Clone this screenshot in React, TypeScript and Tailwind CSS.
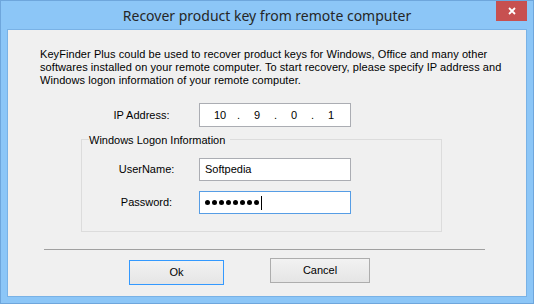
import React from "react";

const ui = "font-['Liberation_Sans',Arial,sans-serif] text-[11px] text-black";

const Field = ({ children, focused }: { children?: React.ReactNode; focused?: boolean }) => (
  <div
    className={`flex h-[23px] w-[152px] items-center bg-white px-[5px] border ${
      focused ? "border-[#569de5]" : "border-[#abadb3]"
    }`}
  >
    {children}
  </div>
);

const Octet = ({ v }: { v: string }) => <span className="w-[30px] text-center">{v}</span>;
const Dot = () => <span className="w-[7px] text-center">.</span>;

const Button = ({ label, primary, className }: { label: string; primary?: boolean; className?: string }) => (
  <button
    className={`flex h-[25px] items-center justify-center border bg-gradient-to-b from-[#f2f2f2] to-[#e5e5e5] ${
      primary ? "border-[#3399ff]" : "border-[#adadad]"
    } ${className ?? ""}`}
  >
    {label}
  </button>
);

export default function App() {
  return (
    <div className="flex h-[304px] w-[534px] flex-col border border-[#6ea6dc] bg-[#8cc6f7]">
      {/* title bar */}
      <div className="relative flex h-[28px] items-center justify-center">
        <span className="font-['Noto_Sans',sans-serif] text-[14px] text-[#262626]">
          Recover product key from remote computer
        </span>
        <div className="absolute right-[6px] top-0 flex h-[20px] w-[31px] items-center justify-center bg-[#c75050]">
          <svg width="8" height="8" viewBox="0 0 8 8">
            <path d="M1 1L7 7M7 1L1 7" stroke="white" strokeWidth="1.8" />
          </svg>
        </div>
      </div>

      {/* client area */}
      <div className={`mx-[6px] mb-[6px] flex flex-1 flex-col border border-[#79b2e6] bg-[#f0f0f0] ${ui}`}>
        <p className="ml-[32px] mt-[18px] leading-[13px] tracking-[0.07px]">
          KeyFinder Plus could be used to recover product keys for Windows, Office and many other
          <br />
          softwares installed on your remote computer. To start recovery, please specify IP address and
          <br />
          Windows logon information of your remote computer.
        </p>

        <div className="mt-[16px] flex h-[24px] items-center">
          <span className="ml-[100px] w-[67px] text-center">IP Address:</span>
          <div className="ml-[24px] flex h-[24px] w-[152px] items-center border border-[#abadb3] bg-white pl-[5px]">
            <Octet v="10" />
            <Dot />
            <Octet v="9" />
            <Dot />
            <Octet v="0" />
            <Dot />
            <Octet v="1" />
          </div>
        </div>

        <div className="relative ml-[73px] mt-[12px] h-[93px] w-[361px] border border-[#dcdcdc]">
          <span className="absolute left-[7px] -top-[8px] bg-[#f0f0f0] pr-[5px]">Windows Logon Information</span>
          <div className="mt-[18px] flex items-center">
            <span className="ml-[30px] w-[69px] text-center">UserName:</span>
            <div className="ml-[18px]">
              <Field>Softpedia</Field>
            </div>
          </div>
          <div className="mt-[10px] flex items-center">
            <span className="ml-[30px] w-[69px] text-center">Password:</span>
            <div className="ml-[18px]">
              <Field focused>
                <div className="flex items-center gap-[2px]">
                  {Array.from({ length: 8 }).map((_, i) => (
                    <span key={i} className="h-[5px] w-[5px] rounded-full bg-black" />
                  ))}
                </div>
                <span className="ml-[2px] h-[14px] w-[1px] bg-black" />
              </Field>
            </div>
          </div>
        </div>

        <div className="ml-[36px] mt-[17px] h-[1px] w-[441px] bg-[#a0a0a0]" />

        <div className="flex items-start">
          <Button label="Ok" primary className="ml-[121px] mt-[10px] w-[95px]" />
          <Button label="Cancel" className="ml-[46px] mt-[8px] w-[100px]" />
        </div>
      </div>
    </div>
  );
}
